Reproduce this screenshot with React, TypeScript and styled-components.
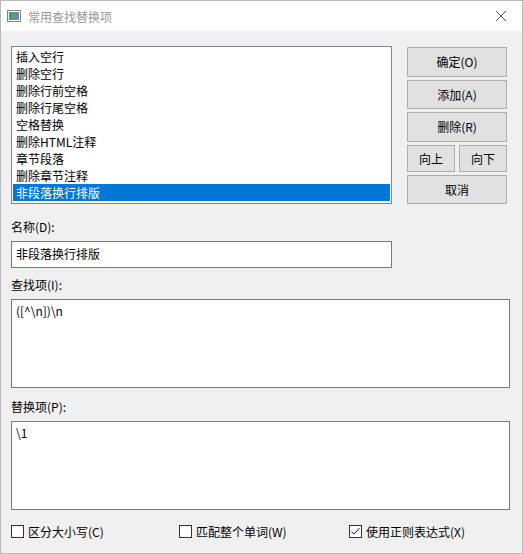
import React from "react";
import styled, { createGlobalStyle } from "styled-components";

const Global = createGlobalStyle`
  html, body { margin: 0; padding: 0; background: #f0f0f0; }
  body { font-family: "Microsoft YaHei", "Noto Sans CJK SC", sans-serif; font-size: 12px; color: #000; }
`;

const Window = styled.div`
  width: 523px;
  height: 554px;
  box-sizing: border-box;
  border: 1px solid #b9b9b9;
  background: #f0f0f0;
  display: flex;
  flex-direction: column;
  overflow: hidden;
`;

const TitleBar = styled.div`
  height: 30px;
  background: #fff;
  display: flex;
  align-items: center;
  padding: 0 6px;
  color: #999;
  font-size: 12px;
  gap: 7px;
`;

const Close = styled.div`
  margin-left: auto;
  width: 30px;
  display: flex;
  justify-content: center;
`;

const Body = styled.div`
  padding: 15px 12px 0 10px;
  display: flex;
  flex-direction: column;
`;

const Top = styled.div`
  display: flex;
  gap: 15px;
`;

const List = styled.div`
  width: 381px;
  height: 158px;
  box-sizing: border-box;
  border: 1px solid #828790;
  background: #fff;
  padding: 1px 1px;
`;

const Item = styled.div<{ $sel?: boolean }>`
  height: 17px;
  line-height: 17px;
  padding-left: 3px;
  background: ${({ $sel }) => ($sel ? "#0078d7" : "transparent")};
  color: ${({ $sel }) => ($sel ? "#fff" : "#000")};
`;

const Buttons = styled.div`
  display: flex;
  flex-direction: column;
  gap: 3px;
  width: 100px;
  padding-top: 1px;
`;

const Row = styled.div`
  display: flex;
  gap: 4px;
`;

const Btn = styled.div`
  flex: 1;
  height: 27px;
  box-sizing: border-box;
  border: 1px solid #adadad;
  background: #e1e1e1;
  display: flex;
  align-items: center;
  justify-content: center;
`;

const Label = styled.div<{ $mt: number }>`
  margin-top: ${({ $mt }) => $mt}px;
  height: 16px;
  line-height: 16px;
`;

const Field = styled.div<{ $w: number; $h: number }>`
  margin-top: 6px;
  width: ${({ $w }) => $w}px;
  height: ${({ $h }) => $h}px;
  box-sizing: border-box;
  border: 1px solid #7a7a7a;
  background: #fff;
  padding: ${({ $h }) => ($h > 40 ? "3px 4px" : "0 4px")};
  line-height: ${({ $h }) => ($h > 40 ? "16px" : "24px")};
`;

const Checks = styled.div`
  margin-top: 13px;
  display: flex;
  align-items: center;
`;

const Check = styled.div<{ $w: number }>`
  width: ${({ $w }) => $w}px;
  display: flex;
  align-items: center;
  gap: 4px;
`;

const Box = styled.div`
  width: 13px;
  height: 13px;
  box-sizing: border-box;
  border: 1px solid #333;
  background: #fff;
  display: flex;
  align-items: center;
  justify-content: center;
`;

const items = ["插入空行", "删除空行", "删除行前空格", "删除行尾空格", "空格替换", "删除HTML注释", "章节段落", "删除章节注释", "非段落换行排版"];

export default function App() {
  return (
    <Window>
      <Global />
      <TitleBar>
        <svg width="14" height="12" viewBox="0 0 14 12">
          <rect x="0.5" y="0.5" width="13" height="11" fill="#fff" stroke="#888" />
          <rect x="2" y="2" width="3" height="8" fill="#3a6" />
          <rect x="5" y="2" width="7" height="8" fill="#6a8aa8" />
        </svg>
        常用查找替换项
        <Close>
          <svg width="12" height="12" viewBox="0 0 12 12">
            <path d="M1 1L11 11M11 1L1 11" stroke="#555" strokeWidth="1" />
          </svg>
        </Close>
      </TitleBar>
      <Body>
        <Top>
          <List>
            {items.map((t, i) => (
              <Item key={t} $sel={i === items.length - 1}>{t}</Item>
            ))}
          </List>
          <Buttons>
            <Btn>确定(O)</Btn>
            <Btn>添加(A)</Btn>
            <Btn>删除(R)</Btn>
            <Row>
              <Btn>向上</Btn>
              <Btn>向下</Btn>
            </Row>
            <Btn>取消</Btn>
          </Buttons>
        </Top>
        <Label $mt={15}>名称(D):</Label>
        <Field $w={381} $h={27}>非段落换行排版</Field>
        <Label $mt={9}>查找项(I):</Label>
        <Field $w={499} $h={89}>([^\n])\n</Field>
        <Label $mt={11}>替换项(P):</Label>
        <Field $w={499} $h={89}>\1</Field>
        <Checks>
          <Check $w={168}><Box />区分大小写(C)</Check>
          <Check $w={170}><Box />匹配整个单词(W)</Check>
          <Check $w={160}>
            <Box>
              <svg width="11" height="11" viewBox="0 0 11 11">
                <path d="M1.5 5.5L4 8L9.5 2" stroke="#222" strokeWidth="1" fill="none" />
              </svg>
            </Box>
            使用正则表达式(X)
          </Check>
        </Checks>
      </Body>
    </Window>
  );
}
